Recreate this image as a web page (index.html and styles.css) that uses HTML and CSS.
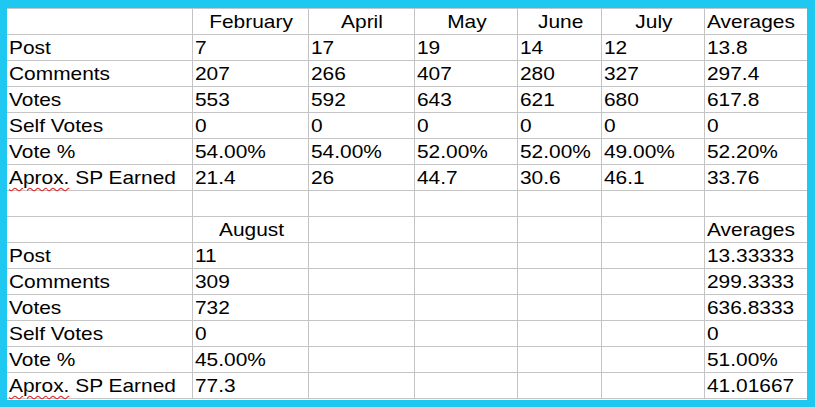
FILE: index.html
```html
<!DOCTYPE html>
<html lang="en">
<head>
<meta charset="utf-8">
<title>Monthly stats</title>
<link rel="stylesheet" href="styles.css">
</head>
<body>
<div class="frame">
  <div class="sheet">
    <div class="c"></div><div class="c h"><span>February</span></div><div class="c h"><span>April</span></div><div class="c h"><span>May</span></div><div class="c h"><span>June</span></div><div class="c h"><span>July</span></div><div class="c"><span>Averages</span></div>
    <div class="c"><span>Post</span></div><div class="c"><span>7</span></div><div class="c"><span>17</span></div><div class="c"><span>19</span></div><div class="c"><span>14</span></div><div class="c"><span>12</span></div><div class="c"><span>13.8</span></div>
    <div class="c"><span>Comments</span></div><div class="c"><span>207</span></div><div class="c"><span>266</span></div><div class="c"><span>407</span></div><div class="c"><span>280</span></div><div class="c"><span>327</span></div><div class="c"><span>297.4</span></div>
    <div class="c"><span>Votes</span></div><div class="c"><span>553</span></div><div class="c"><span>592</span></div><div class="c"><span>643</span></div><div class="c"><span>621</span></div><div class="c"><span>680</span></div><div class="c"><span>617.8</span></div>
    <div class="c"><span>Self Votes</span></div><div class="c"><span>0</span></div><div class="c"><span>0</span></div><div class="c"><span>0</span></div><div class="c"><span>0</span></div><div class="c"><span>0</span></div><div class="c"><span>0</span></div>
    <div class="c"><span>Vote %</span></div><div class="c"><span>54.00%</span></div><div class="c"><span>54.00%</span></div><div class="c"><span>52.00%</span></div><div class="c"><span>52.00%</span></div><div class="c"><span>49.00%</span></div><div class="c"><span>52.20%</span></div>
    <div class="c"><span><span class="sp">Aprox.</span> SP Earned</span></div><div class="c"><span>21.4</span></div><div class="c"><span>26</span></div><div class="c"><span>44.7</span></div><div class="c"><span>30.6</span></div><div class="c"><span>46.1</span></div><div class="c"><span>33.76</span></div>
    <div class="c"></div><div class="c"></div><div class="c"></div><div class="c"></div><div class="c"></div><div class="c"></div><div class="c"></div>
    <div class="c"></div><div class="c h"><span>August</span></div><div class="c"></div><div class="c"></div><div class="c"></div><div class="c"></div><div class="c"><span>Averages</span></div>
    <div class="c"><span>Post</span></div><div class="c"><span>11</span></div><div class="c"></div><div class="c"></div><div class="c"></div><div class="c"></div><div class="c"><span>13.33333</span></div>
    <div class="c"><span>Comments</span></div><div class="c"><span>309</span></div><div class="c"></div><div class="c"></div><div class="c"></div><div class="c"></div><div class="c"><span>299.3333</span></div>
    <div class="c"><span>Votes</span></div><div class="c"><span>732</span></div><div class="c"></div><div class="c"></div><div class="c"></div><div class="c"></div><div class="c"><span>636.8333</span></div>
    <div class="c"><span>Self Votes</span></div><div class="c"><span>0</span></div><div class="c"></div><div class="c"></div><div class="c"></div><div class="c"></div><div class="c"><span>0</span></div>
    <div class="c"><span>Vote %</span></div><div class="c"><span>45.00%</span></div><div class="c"></div><div class="c"></div><div class="c"></div><div class="c"></div><div class="c"><span>51.00%</span></div>
    <div class="c"><span><span class="sp">Aprox.</span> SP Earned</span></div><div class="c"><span>77.3</span></div><div class="c"></div><div class="c"></div><div class="c"></div><div class="c"></div><div class="c"><span>41.01667</span></div>
  </div>
</div>
</body>
</html>
```
FILE: styles.css
```css
html, body {
  margin: 0;
  padding: 0;
  background: #1fc8f1;
}

.frame {
  width: 815px;
  height: 407px;
  box-sizing: border-box;
  padding: 8px 0 0 7px;
}

.sheet {
  display: grid;
  grid-template-columns: 185px 115px 105px 102px 83px 102px 102px;
  grid-auto-rows: 25px;
  gap: 1px;
  width: 800px;
  background: #c4c4c4;
  padding: 1px 0;
  border-bottom: 1px solid #ffffff;
}

.c {
  background: #ffffff;
  font-family: "Liberation Sans", Arial, sans-serif;
  font-size: 19px;
  line-height: 24px;
  padding: 1px 0 0 2px;
  color: #000000;
  white-space: nowrap;
  overflow: visible;
}

.c > span {
  display: inline-block;
  transform: scaleX(1.1);
  transform-origin: left center;
}

.h {
  text-align: center;
}

.h > span {
  transform-origin: center center;
}

.sp {
  text-decoration: underline wavy #e02020;
  text-decoration-thickness: 1px;
  text-underline-offset: 3px;
}
```
